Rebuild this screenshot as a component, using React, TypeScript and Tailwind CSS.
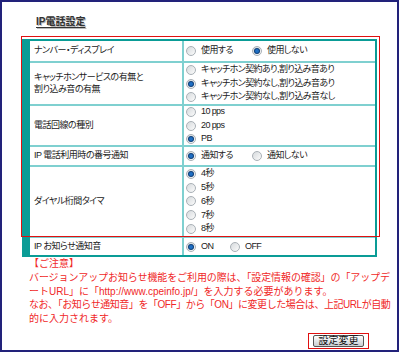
import React from 'react';

const jp = { fontFamily: '"Liberation Sans", "Noto Sans CJK JP", sans-serif' };

function Radio({ checked }: { checked?: boolean }) {
  return (
    <span className="relative inline-flex w-[10px] h-[10px] shrink-0 items-center justify-center rounded-full border border-[#a9b0b6] bg-gradient-to-br from-[#d6dadd] to-[#fbfbfb]">
      {checked && <span className="w-[4px] h-[4px] rounded-full bg-[#1f6fc4] ring-1 ring-[#0d3e78]" />}
    </span>
  );
}

function Option({ label, checked, w }: { label: string; checked?: boolean; w?: string }) {
  return (
    <label className={`flex items-center gap-[5px] h-[14px] ${w ?? ''}`}>
      <Radio checked={checked} />
      <span>{label}</span>
    </label>
  );
}

interface RowProps {
  label: React.ReactNode;
  h: string;
  first?: boolean;
  children: React.ReactNode;
}

function Row({ label, h, first, children }: RowProps) {
  return (
    <div className={`flex ${h} ${first ? '' : 'border-t-2 border-[#7fd0d0]'}`}>
      <div className="w-[154px] shrink-0 flex items-center pl-[4px] border-r-2 border-[#7fd0d0] leading-[11.5px]">
        {label}
      </div>
      <div className="flex-1 flex flex-col justify-center pl-[2px] tracking-[-0.6px]">{children}</div>
    </div>
  );
}

export default function App() {
  return (
    <div className="w-[400px] h-[354px] bg-white" style={jp}>
      <div className="w-[399px] h-[352px] border-2 border-[#22227a] pt-[13px]">
        <h1 className="ml-[34px] text-[10px] font-bold leading-[13px] underline underline-offset-2 text-[#333] [text-shadow:1px_1px_0_#bbb]">
          IP電話設定
        </h1>

        <div className="relative ml-[20px] mt-[11px] w-[355px] border-2 border-[#0a9c96] text-[9px] text-[#222] [font-feature-settings:'palt'] tracking-[-0.5px]">
          <div className="absolute left-[-3px] top-[-5px] w-[359px] h-[201px] border border-[#e01010] pointer-events-none" />
          <div className="flex">
            <div className="w-[6px] bg-[#0a9c96] shrink-0" />
            <div className="flex-1">
              <Row first h="h-[20px]" label="ナンバー・ディスプレイ">
                <div className="flex">
                  <Option label="使用する" w="w-[66px]" />
                  <Option label="使用しない" checked />
                </div>
              </Row>
              <Row
                h="h-[43px]"
                label={
                  <span>
                    キャッチホンサービスの有無と
                    <br />
                    割り込み音の有無
                  </span>
                }
              >
                <Option label="キャッチホン契約あり,割り込み音あり" />
                <Option label="キャッチホン契約なし,割り込み音あり" checked />
                <Option label="キャッチホン契約なし,割り込み音なし" />
              </Row>
              <Row h="h-[41px]" label="電話回線の種別">
                <Option label="10 pps" />
                <Option label="20 pps" />
                <Option label="PB" checked />
              </Row>
              <Row h="h-[20px]" label="IP 電話利用時の番号通知">
                <div className="flex">
                  <Option label="通知する" checked w="w-[66px]" />
                  <Option label="通知しない" />
                </div>
              </Row>
              <Row h="h-[71px]" label="ダイヤル桁間タイマ">
                <Option label="4秒" checked />
                <Option label="5秒" />
                <Option label="6秒" />
                <Option label="7秒" />
                <Option label="8秒" />
              </Row>
              <Row h="h-[19px]" label="IP お知らせ通知音">
                <div className="flex">
                  <Option label="ON" checked w="w-[44px]" />
                  <Option label="OFF" />
                </div>
              </Row>
            </div>
          </div>
        </div>

        <div className="ml-[27px] text-[10px] leading-[13.8px] text-[#f02828] whitespace-nowrap">
          <div>【ご注意】</div>
          <div className="tracking-[-0.1px]">バージョンアップお知らせ機能をご利用の際は、「設定情報の確認」の「アップデ</div>
          <div>ートURL」に「http://www.cpeinfo.jp/」を入力する必要があります。</div>
          <div className="tracking-[-0.45px]">なお、「お知らせ通知音」を「OFF」から「ON」に変更した場合は、上記URLが自動</div>
          <div>的に入力されます。</div>
        </div>

        <div className="flex justify-end mr-[28px] mt-[7px]">
          <div className="border border-[#e01010] px-[4px] py-[1px]">
            <button className="w-[51px] h-[12px] flex items-center justify-center rounded-[2px] border border-[#555] bg-gradient-to-b from-[#ffffff] to-[#c9cdd2] text-[10px] leading-[10px] text-[#111]">
              設定変更
            </button>
          </div>
        </div>
      </div>
    </div>
  );
}
